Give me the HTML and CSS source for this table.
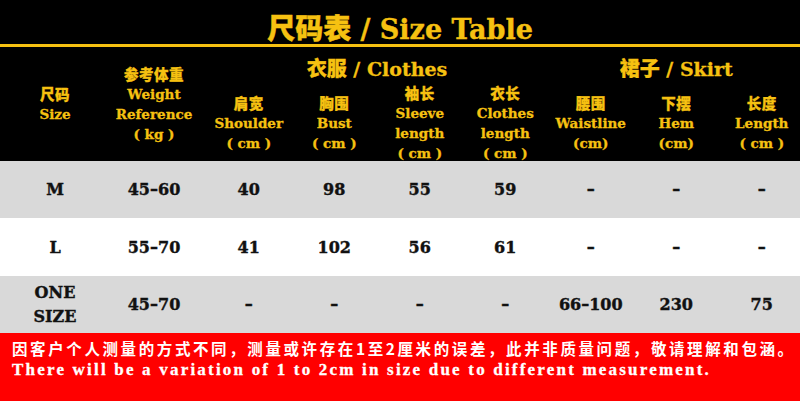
FILE: index.html
```html
<!DOCTYPE html>
<html lang="zh">
<head>
<meta charset="utf-8">
<title>尺码表 / Size Table</title>
<link rel="stylesheet" href="styles.css">
</head>
<body>
<div class="page">
  <header class="title-bar">
    <h1 class="title"><span class="cn">尺码表</span> / Size Table</h1>
  </header>

  <div class="head">
    <div class="th span2 c1"><span class="cn">尺码</span><span>Size</span></div>
    <div class="th span2 c2 weight"><span class="cn">参考体重</span><span>Weight</span><span>Reference</span><span>( kg )</span></div>
    <div class="group clothes"><p><span class="cn">衣服</span> / Clothes</p></div>
    <div class="group skirt"><p><span class="cn">裙子</span> / Skirt</p></div>
    <div class="th"><span class="cn">肩宽</span><span>Shoulder</span><span>( cm )</span></div>
    <div class="th"><span class="cn">胸围</span><span>Bust</span><span>( cm )</span></div>
    <div class="th"><span class="cn">袖长</span><span>Sleeve</span><span>length</span><span>( cm )</span></div>
    <div class="th"><span class="cn">衣长</span><span>Clothes</span><span>length</span><span>( cm )</span></div>
    <div class="th"><span class="cn">腰围</span><span>Waistline</span><span>(cm)</span></div>
    <div class="th"><span class="cn">下摆</span><span>Hem</span><span>(cm)</span></div>
    <div class="th"><span class="cn">长度</span><span>Length</span><span>( cm )</span></div>
  </div>

  <div class="row gray r1">
    <div class="td">M</div><div class="td weight">45–60</div><div class="td">40</div><div class="td">98</div><div class="td">55</div><div class="td">59</div><div class="td">–</div><div class="td">–</div><div class="td">–</div>
  </div>
  <div class="row white r2">
    <div class="td">L</div><div class="td weight">55–70</div><div class="td">41</div><div class="td">102</div><div class="td">56</div><div class="td">61</div><div class="td">–</div><div class="td">–</div><div class="td">–</div>
  </div>
  <div class="row gray r3">
    <div class="td two"><span>ONE</span><span>SIZE</span></div><div class="td weight">45–70</div><div class="td">–</div><div class="td">–</div><div class="td">–</div><div class="td">–</div><div class="td">66–100</div><div class="td">230</div><div class="td">75</div>
  </div>

  <footer class="note">
    <p class="note-cn">因客户个人测量的方式不同，测量或许存在1至2厘米的误差，此并非质量问题，敬请理解和包涵。</p>
    <p class="note-en">There will be a variation of 1 to 2cm in size due to different measurement.</p>
  </footer>
</div>
</body>
</html>
```

FILE: styles.css
```css
html, body {
  margin: 0;
  padding: 0;
  background: #ffffff;
}

.page {
  width: 800px;
  height: 409px;
  overflow: hidden;
  background: #ffffff;
  font-family: "DejaVu Serif", "Noto Sans CJK SC", serif;
  font-weight: bold;
  --cols: 110px 96px repeat(7, 85.5px);
  --gold: #f6c111;
}

.cn {
  font-family: "Noto Sans CJK SC", sans-serif;
  font-weight: 900;
}

.title-bar {
  background: #000;
  height: 44px;
  border-bottom: 3px solid var(--gold);
  box-sizing: content-box;
}

.title {
  margin: 0;
  padding-top: 10px;
  line-height: 34px;
  text-align: center;
  color: var(--gold);
  font-size: 27px;
  font-weight: bold;
  -webkit-text-stroke: 0.4px var(--gold);
}

.title .cn {
  font-size: 28px;
}

.head {
  display: grid;
  grid-template-columns: var(--cols);
  grid-template-rows: 38px 76px;
  width: 804.5px;
  background: #000;
  color: var(--gold);
}

.th {
  display: flex;
  flex-direction: column;
  align-items: center;
  justify-content: center;
  text-align: center;
  font-size: 13.5px;
  line-height: 20px;
  white-space: nowrap;
  -webkit-text-stroke: 0.3px var(--gold);
}

.th .cn {
  font-size: 14.5px;
  letter-spacing: 0.5px;
}

.span2 {
  grid-row: 1 / span 2;
}

.c1 { grid-column: 1; }
.c2 { grid-column: 2; }

.weight {
  padding-right: 8px;
}

.group {
  display: flex;
  align-items: center;
  justify-content: center;
  padding-top: 4px;
  font-size: 19px;
  line-height: 30px;
  white-space: nowrap;
  -webkit-text-stroke: 0.3px var(--gold);
}

.group p {
  margin: 0;
}

.group .cn {
  font-size: 20px;
}

.clothes { grid-column: 3 / span 4; grid-row: 1; }
.skirt { grid-column: 7 / span 3; grid-row: 1; }

.row {
  display: grid;
  grid-template-columns: var(--cols);
  width: 804.5px;
  color: #111;
}

.r1 { height: 57px; }
.r2 { height: 58px; }
.r3 { height: 57px; }

.gray { background: #d9d9d9; }
.white { background: #ffffff; }

.td {
  display: flex;
  flex-direction: column;
  align-items: center;
  justify-content: center;
  text-align: center;
  font-size: 16px;
  -webkit-text-stroke: 0.4px #111;
}

.td.two {
  line-height: 24px;
}

.note {
  background: #ff0000;
  height: 68px;
  box-sizing: border-box;
  padding: 4px 0 0 12px;
  color: #ffffff;
}

.note p {
  margin: 0;
  line-height: 22px;
  white-space: nowrap;
}

.note-cn {
  font-family: "Noto Sans CJK SC", sans-serif;
  font-size: 15.5px;
  letter-spacing: 2.6px;
}

.note-en {
  font-family: "Liberation Serif", serif;
  font-size: 17px;
  letter-spacing: 2.2px;
  -webkit-text-stroke: 0.3px #fff;
}
```
